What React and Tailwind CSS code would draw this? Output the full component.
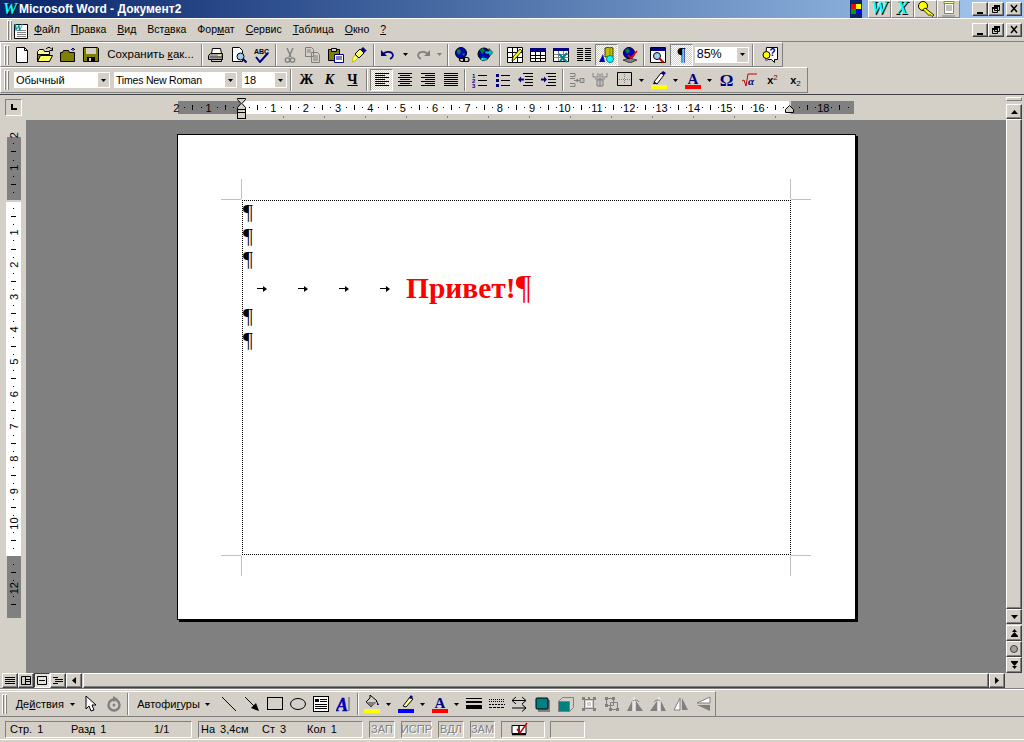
import React from "react";

const raised = "border border-t-white border-l-white border-b-[#404040] border-r-[#404040] shadow-[inset_-1px_-1px_0_#808080]";
const ui = { fontFamily: '"Liberation Sans", Arial, sans-serif' };
const serif = { fontFamily: '"Liberation Serif", serif' };

const S = ({ children, w = 16, h = 16, vb }) => (
  <svg width={w} height={h} viewBox={vb || `0 0 ${w} ${h}`} className="block shrink-0">{children}</svg>
);

const Lines = ({ rows }) => (
  <S>{rows.map(([x, w], i) => <rect key={i} x={x} y={1 + i * 2} width={w} height="1" fill="#000" />)}</S>
);

const Icons = {
  New: () => <S><path d="M2.5 .5h8l3 3v12h-11z" fill="#fff" stroke="#000" /><path d="M10.5 .5v3h3" fill="none" stroke="#000" /></S>,
  Open: () => <S><path d="M.5 4.5l2-2h4l1 2h5v3h-12z" fill="#ffff99" stroke="#000" /><path d="M.5 14.5v-7h12v7z" fill="#808000" stroke="#000" /><path d="M.5 14.5l3-6h12l-3 6z" fill="#ffff66" stroke="#000" /><path d="M9 2l2-1.5h2l2 2M15.5 .5v3h-3" fill="none" stroke="#000" /></S>,
  FolderUp: () => <S><path d="M.5 14.5v-9h2l1-2h5l1 2h5v9z" fill="#808000" stroke="#000" /><path d="M11 3l2-2 2 2M13 1v3" fill="none" stroke="#000080" /></S>,
  Save: () => <S><path d="M.5 .5h14l1 1v13h-15z" fill="#808000" stroke="#000" /><rect x="3" y="1" width="10" height="6" fill="#d4d0c8" /><rect x="4" y="10" width="8" height="5" fill="#000" /><rect x="6" y="11" width="2" height="3" fill="#d4d0c8" /></S>,
  Print: () => <S><path d="M4.5 1.5h8l1 5h-10z" fill="#fff" stroke="#000" /><path d="M.5 8.5l2-2h12v6h-14z" fill="#a0a0a0" stroke="#000" /><path d="M2 10h12" stroke="#404040" /><rect x="10" y="7.5" width="3" height="1.5" fill="#ffff00" /><path d="M3.5 12.5h10v2h-10z" fill="#d4d0c8" stroke="#000" /></S>,
  Preview: () => <S><path d="M1.5 .5h7l3 3v11h-10z" fill="#fff" stroke="#000" /><circle cx="9.5" cy="9.5" r="3.5" fill="#a6caf0" stroke="#000" /><path d="M12 12l3.5 3.5" stroke="#000080" strokeWidth="2" /></S>,
  Spell: () => <S><text x="0" y="6.5" fontSize="7" fontWeight="700" fill="#000" style={ui}>ABC</text><path d="M2 10l4 5 8-9" fill="none" stroke="#000080" strokeWidth="2" /></S>,
  Cut: () => <S><path d="M5 1l4 9M11 1l-4 9" stroke="#808080" strokeWidth="1.4" fill="none" /><circle cx="5.5" cy="13" r="2.2" fill="none" stroke="#808080" strokeWidth="1.3" /><circle cx="10.5" cy="13" r="2.2" fill="none" stroke="#808080" strokeWidth="1.3" /></S>,
  Copy: () => <S><path d="M.5 .5h6l2 2v7h-8zM6.5 5.5h6l2 2v8h-8z" fill="#d4d0c8" stroke="#808080" /><path d="M8 9h5M8 11h5M8 13h5M2 3h4M2 5h4" stroke="#808080" /></S>,
  Paste: () => <S><path d="M.5 2.5h11v11h-11z" fill="#808000" stroke="#000" /><path d="M3.5 1.5h5v3h-5z" fill="#d4d0c8" stroke="#000" /><path d="M6.5 7.5h9v8h-9z" fill="#fff" stroke="#000080" /><path d="M8 10h6M8 12h6" stroke="#000080" /></S>,
  Painter: () => <S><path d="M9 2l4 4-5 5-4-4z" fill="#ffff66" stroke="#000" /><path d="M12 .5l3 3-2 2-3-3z" fill="#000080" stroke="#000080" /><path d="M4 8l3 3-3 3-3 1 1-2-1-1z" fill="#ffff66" stroke="#c0c000" /></S>,
  Undo: () => <S><path d="M3 7c3-3 9-3 10 1 0 2-1 3-3 4" fill="none" stroke="#000080" strokeWidth="1.6" /><path d="M1 3v6h6z" fill="#000080" /></S>,
  Redo: () => <S><path d="M13 7c-3-3-9-3-10 1 0 2 1 3 3 4" fill="none" stroke="#808080" strokeWidth="1.6" /><path d="M15 3v6H9z" fill="#808080" /></S>,
  Web: () => <S><circle cx="7" cy="6" r="5.5" fill="#0000c0" stroke="#000" /><path d="M3 3l3-1 1 3-2 3-2-2zM8 7l3-1-1 3z" fill="#008040" /><rect x="5.5" y="10.5" width="5" height="4" rx="2" fill="none" stroke="#000" strokeWidth="1.2" /><rect x="9.5" y="10.5" width="5.5" height="4" rx="2" fill="none" stroke="#000" strokeWidth="1.2" /></S>,
  Globe: () => <S><circle cx="7" cy="7" r="6" fill="#0000c0" stroke="#000" /><path d="M3 3l3-2 2 3-3 3zM5 9l3 1-1 3z" fill="#008040" /><path d="M8 4h4V1.5l4 4-4 4V7H8z" fill="#00c0c0" stroke="#000" strokeWidth=".6" /><path d="M3 12l3-2v1h4v2H6v1z" fill="#00ffff" stroke="#000" strokeWidth=".5" /></S>,
  TableDraw: () => <S><path d="M.5 .5h15v15H.5z" fill="#fff" stroke="#000" /><path d="M.5 5.5h15M.5 10.5h15M5.5 .5v15M10.5 .5v15" stroke="#000" /><path d="M5 14l1-4 7-8 2 2-7 8z" fill="#ffff00" stroke="#000" strokeWidth=".8" /></S>,
  Table: () => <S><path d="M.5 1.5h15v13H.5z" fill="#fff" stroke="#000" /><rect x="0" y="1" width="16" height="4" fill="#000080" /><path d="M.5 8.5h15M.5 11.5h15M5.5 5v9M10.5 5v9" stroke="#000" /></S>,
  Excel: () => <S><path d="M.5 1.5h15v13H.5z" fill="#fff" stroke="#000" /><rect x="0" y="1" width="16" height="3" fill="#000080" /><path d="M.5 7.5h15M.5 10.5h15M5.5 4v10M10.5 4v10" stroke="#808080" /><path d="M6 7l8 8M14 6l-7 8" stroke="#008080" strokeWidth="2" /></S>,
  Columns: () => <S><path d="M1 1.5h14M1 3.5h14M1 5.5h14M1 7.5h14M1 9.5h14M1 11.5h14M1 13.5h14" stroke="#000" /><rect x="7" y="0" width="2" height="15" fill="#d4d0c8" /></S>,
  Drawing: () => <S><path d="M6 1l5-1 3 1v9H6z" fill="#c0c000" stroke="#000" strokeWidth=".7" /><path d="M11 0v9" stroke="#808000" /><path d="M0 15l4-8 2 8z" fill="#0000c0" /><circle cx="11" cy="12" r="3.5" fill="#00ffff" stroke="#008080" /></S>,
  DocMap: () => <S><path d="M1 13l7-2 7 2-7 3z" fill="#808080" stroke="#000" strokeWidth=".6" /><circle cx="7" cy="6" r="5.5" fill="#0000c0" stroke="#000" /><path d="M3 3l3-2 2 3-3 3z" fill="#008040" /><path d="M6 8l3 3 6-7" stroke="#ff0000" strokeWidth="1.6" fill="none" /></S>,
  ZoomDoc: () => <S><path d="M.5 .5h15v15H.5z" fill="#fff" stroke="#000" /><rect x="1" y="1" width="14" height="3" fill="#000080" /><circle cx="7" cy="9" r="3.5" fill="#a6caf0" stroke="#000" /><path d="M9.5 11.5l4 4" stroke="#c00000" strokeWidth="2" /></S>,
  Help: () => <S w={17}><path d="M4.5 .5h11v12h-3v3l-3-3h-6z" fill="#fff" stroke="#000" /><circle cx="4.5" cy="8" r="3.5" fill="#ffff00" stroke="#000" /><rect x="3" y="12" width="3" height="2" fill="#808080" /><text x="7.5" y="9" fontSize="10" fontWeight="700" fill="#000080" style={ui}>?</text></S>,
  AlignL: () => <Lines rows={[[1, 14], [1, 10], [1, 14], [1, 10], [1, 14], [1, 10], [1, 14]]} />,
  AlignC: () => <Lines rows={[[1, 14], [3, 10], [1, 14], [3, 10], [1, 14], [3, 10], [1, 14]]} />,
  AlignR: () => <Lines rows={[[1, 14], [5, 10], [1, 14], [5, 10], [1, 14], [5, 10], [1, 14]]} />,
  AlignJ: () => <Lines rows={[[1, 14], [1, 14], [1, 14], [1, 14], [1, 14], [1, 14], [1, 14]]} />,
  Numbered: () => <S><text x="0" y="6" fontSize="6" fontWeight="700" fill="#000080" style={ui}>1</text><text x="0" y="11" fontSize="6" fontWeight="700" fill="#000080" style={ui}>2</text><text x="0" y="16" fontSize="6" fontWeight="700" fill="#000080" style={ui}>3</text><path d="M6 3.5h9M6 8.5h9M6 13.5h9" stroke="#000" /></S>,
  Bullets: () => <S><path d="M1 2h3v3H1zM1 7h3v3H1zM1 12h3v3H1z" fill="#000080" /><path d="M6 3.5h9M6 8.5h9M6 13.5h9" stroke="#000" /></S>,
  Outdent: () => <S><path d="M5 1.5h10M7 4.5h8M7 7.5h8M7 10.5h8M5 13.5h10" stroke="#000" /><path d="M0 7.5l3-3v2h3v2H3v2z" fill="#000080" /></S>,
  Indent: () => <S><path d="M5 1.5h10M7 4.5h8M7 7.5h8M7 10.5h8M5 13.5h10" stroke="#000" /><path d="M6 7.5l-3-3v2H0v2h3v2z" fill="#000080" /></S>,
  MergeA: () => <S><path d="M1 1.5h5v3H1M1 11.5h5v3H1" fill="none" stroke="#808080" /><path d="M1 6.5h5M5 8.5h6" stroke="#808080" /><path d="M6 8.5l3-2v4z" fill="#808080" /><path d="M11 6.5h4v4h-4z" fill="#c0c0c0" stroke="#808080" /></S>,
  MergeB: () => <S><path d="M1 1v4h5V1M10 1v4h5V1M3 7h10" fill="none" stroke="#808080" /><path d="M8 2v13M5 8h6v6H5z" fill="#c0c0c0" stroke="#808080" /></S>,
  Border: () => <S><path d="M.5 .5h14v13H.5z" fill="none" stroke="#000" /><path d="M7.5 2v10M2 7.5h11" stroke="#808080" strokeDasharray="1 1" /></S>,
  Highlight: () => <S h={18} w={16}><path d="M3 11l7-9 3 2-7 9z" fill="#fff" stroke="#000" /><path d="M10 2l2-2 3 2-2 2z" fill="#000080" /><path d="M3 11l3 2-4 0z" fill="#000" /><rect x="0" y="14" width="16" height="4" fill="#ffff00" /></S>,
  FontColor: () => <S h={18} w={16}><text x="8" y="13" textAnchor="middle" fontSize="15" fontWeight="700" fill="#000080" style={serif}>A</text><rect x="0" y="14" width="16" height="4" fill="#ff0000" /></S>,
  Sqrt: () => <S w={17}><path d="M1 9l2-1 2 6 2-12h9" fill="none" stroke="#c00000" /><text x="7" y="13" fontSize="11" fontStyle="italic" fill="#000080" fontWeight="700" style={serif}>α</text></S>,
  Cursor: () => <S><path d="M3 0v13l3-3 2 5 3-1-2-5h4z" fill="#fff" stroke="#000" /></S>,
  Rotate: () => <S><circle cx="8" cy="9" r="5.5" fill="none" stroke="#808080" strokeWidth="2.4" /><circle cx="8" cy="9" r="1.5" fill="#808080" /><path d="M7 0l5 3-5 3z" fill="#808080" /></S>,
  Line: () => <S><path d="M1 1l14 14" stroke="#000" fill="none" /></S>,
  ArrowLine: () => <S><path d="M1 1l9 9" stroke="#000" /><path d="M15 15l-8-3 5-5z" fill="#000" /></S>,
  Rect: () => <S><rect x=".5" y="1.5" width="15" height="12" fill="none" stroke="#000" /></S>,
  Ellipse: () => <S><ellipse cx="8" cy="8" rx="7.5" ry="5.5" fill="none" stroke="#000" /></S>,
  TextBox: () => <S><rect x=".5" y=".5" width="15" height="15" fill="#fff" stroke="#000" /><path d="M2 3h4v3H2z" fill="#000" /><path d="M7 3.5h7M7 5.5h7M2 8.5h12M2 10.5h12M2 12.5h12" stroke="#000" /></S>,
  WordArt: () => <S><text x="0" y="15" fontSize="18" fontWeight="700" fontStyle="italic" fill="#0000c0" stroke="#000080" strokeWidth=".4" style={serif}>A</text><path d="M13 1v14" stroke="#808080" strokeWidth="1.5" /></S>,
  Fill: () => <S h={18} w={16}><path d="M6 0v3L2 7l5 5 6-6z" fill="#d4d0c8" stroke="#000" /><path d="M2 7h11l-6 5z" fill="#808080" /><path d="M13 6l2 4h-2z" fill="#000080" /><rect x="0" y="14" width="16" height="4" fill="#ffff00" /></S>,
  LineColor: () => <S h={18} w={16}><path d="M5 11l7-9 3 2-7 8z" fill="#ffff99" stroke="#000" /><path d="M11 3l2-3 2 2-2 2z" fill="#000080" /><rect x="0" y="14" width="16" height="4" fill="#0000ff" /></S>,
  Thick: () => <S><rect x="0" y="2" width="16" height="1" /><rect x="0" y="5" width="16" height="2" /><rect x="0" y="9" width="16" height="4" /></S>,
  Dash: () => <S><path d="M0 3.5h16M0 5.5h16" stroke="#000" strokeDasharray="1 1" /><path d="M0 8.5h16" stroke="#000" strokeDasharray="2 1" /><path d="M0 11.5h16" stroke="#000" strokeDasharray="3 1" /></S>,
  Arrows: () => <S><path d="M0 4.5h14M10 1l4 3.5-4 3.5M0 12h14M10 8.5l4 3.5-4 3.5M4 1L0 4.5l4 3.5" fill="none" stroke="#000" /></S>,
  Shadow: () => <S><rect x="3" y="4" width="12" height="12" fill="#808080" /><rect x="1" y="2" width="12" height="11" rx="1" fill="#008080" stroke="#000" /></S>,
  Cube: () => <S><path d="M.5 5.5l4-4h11v10l-4 4h-11z" fill="#d4d0c8" stroke="#808080" /><path d="M.5 5.5h11v10h-11z" fill="#008080" stroke="#808080" /></S>,
  Group: () => <S><path d="M3.5 3.5h9v9h-9z" fill="none" stroke="#808080" /><path d="M1 1h3v3H1zM7 1h2v2H7zM12 1h3v3h-3zM1 12h3v3H1zM12 12h3v3h-3z" fill="#808080" /><path d="M5.5 5.5h5v5h-5z" fill="none" stroke="#fff" /></S>,
  Ungroup: () => <S><path d="M2.5 2.5h7v7h-7zM6.5 6.5h7v7h-7z" fill="none" stroke="#808080" /><path d="M1 1h3v3H1zM8 1h3v3H8zM1 8h3v3H1zM12 12h3v3h-3zM5 12h3v3H5z" fill="#808080" /></S>,
  RotL: () => <S><path d="M0 15l5-10v10zM9 5l7 10H9z" fill="#808080" /><path d="M7 1v14" stroke="#fff" /><path d="M6 5a4 4 0 016 1" stroke="#808080" fill="none" /></S>,
  RotR: () => <S><path d="M16 15l-5-10v10zM7 5L0 15h7z" fill="#808080" /><path d="M9 1v14" stroke="#fff" /><path d="M10 5a4 4 0 00-6 1" stroke="#808080" fill="none" /></S>,
  FlipH: () => <S><path d="M7 2v12H1z" fill="#fff" stroke="#808080" /><path d="M9 2v12h6z" fill="#808080" /></S>,
  FlipV: () => <S><path d="M14 1v6H1z" fill="#fff" stroke="#808080" /><path d="M14 9v6L1 9z" fill="#808080" /></S>,
};

const Btn = ({ children, pressed, className = "w-[23px]" }) => (
  <div className={`${className} h-[22px] shrink-0 flex items-center justify-center ${pressed ? "border border-t-[#808080] border-l-[#808080] border-b-white border-r-white bg-[repeating-conic-gradient(#d4d0c8_0_25%,#ffffff_0_50%)] bg-size-[2px_2px]" : ""}`}>
    {children}
  </div>
);

const Tri = ({ fill = "#000" }) => (
  <svg width="5" height="3" viewBox="0 0 5 3" className="block shrink-0"><path d="M0 0h5L2.5 3z" fill={fill} /></svg>
);
const Arrow = ({ fill }) => (
  <div className="w-[11px] h-[22px] shrink-0 flex items-center justify-center"><Tri fill={fill} /></div>
);

const Sep = ({ className = "w-[5px]" }) => (
  <div className={`${className} h-[22px] shrink-0 flex justify-center`}>
    <div className="w-[2px] h-full border-l border-l-[#808080] border-r border-r-white" />
  </div>
);

const Grip = () => (
  <div className="w-[5px] h-[20px] shrink-0 flex gap-px ml-[2px]">
    <div className="w-[2px] h-full border-l border-t border-white bg-[#808080]" />
    <div className="w-[2px] h-full border-l border-t border-white bg-[#808080]" />
  </div>
);

const Combo = ({ text, className, textClass = "text-[11px]" }) => (
  <div className={`${className} h-[16px] shrink-0 bg-white flex items-center justify-between text-black pl-[2px]`}>
    <span className={`leading-none ${textClass}`}>{text}</span>
    <div className="w-[11px] h-[14px] mr-px bg-[#d4d0c8] flex items-center justify-center"><Tri /></div>
  </div>
);

const WinBtn = ({ children }) => (
  <div className={`w-[16px] h-[14px] bg-[#d4d0c8] ${raised} flex items-center justify-center`}>
    <svg width="10" height="10" viewBox="0 0 10 10">{children}</svg>
  </div>
);

const WinBtns = () => (
  <div className="flex">
    <WinBtn><rect x="2" y="8" width="6" height="2" fill="#000" /></WinBtn>
    <WinBtn><path d="M3.5 1.5h5v5h-5zM1.5 3.5h5v5h-5z" fill="#d4d0c8" stroke="#000" /><path d="M3 1h6v2H3zM1 3h6v2H1z" fill="#000" /></WinBtn>
    <div className="w-[2px]" />
    <WinBtn><path d="M2 1l6 7M8 1L2 8" stroke="#000" strokeWidth="1.5" /></WinBtn>
  </div>
);

const TrayBtn = ({ children }) => (
  <div className="w-[23px] h-[18px] bg-[#d4d0c8] border border-t-white border-l-white border-b-[#808080] border-r-[#808080] flex items-center justify-center">
    {children}
  </div>
);

const WLogo = ({ letter = "W", size = 16, w = 17 }) => (
  <svg width={w} height="16" viewBox={`0 0 ${w} 16`} className="block overflow-visible">
    <text x={w / 2 + 0.5} y="14" textAnchor="middle" fontSize={size} fontWeight="700" fontStyle="italic" fill="#000" style={serif}>{letter}</text>
    <text x={w / 2 - 0.5} y="13" textAnchor="middle" fontSize={size} fontWeight="700" fontStyle="italic" fill="#00ffff" style={serif}>{letter}</text>
  </svg>
);

const Toolbar = ({ children, className }) => (
  <div className={`${className} h-full flex items-center border-t border-t-white border-l border-l-white border-b border-b-[#808080] border-r border-r-[#808080]`}>{children}</div>
);

function HRuler() {
  const items = [];
  for (let k = -8; k <= 75; k++) {
    const x = 241 + (32.35 * k) / 4;
    if (k === 0 || k === 68 || x > 852) continue;
    if (k % 4 === 0) {
      items.push(<text key={k} x={x} y="112" textAnchor="middle" fontSize="11" fill="#000" style={ui}>{Math.abs(k / 4)}</text>);
    } else if (k % 2 === 0) {
      items.push(<rect key={k} x={Math.round(x)} y="105" width="1" height="5" fill="#000" />);
    } else {
      items.push(<rect key={k} x={Math.round(x)} y="107" width="1" height="1" fill="#000" />);
    }
  }
  const stops = [];
  for (let i = 1; i <= 13; i++) stops.push(<rect key={i} x={242 + 41 * i} y="116" width="1" height="2" fill="#808080" />);
  return (
    <svg width="980" height="25" viewBox="26 95 980 25" className="block">
      <rect x="178" y="101" width="64" height="13" fill="#808080" />
      <rect x="242" y="101" width="547" height="13" fill="#fff" />
      <rect x="791" y="101" width="63" height="13" fill="#808080" />
      {items}
      {stops}
      <path d="M237.5 98.5h8v1l-3.5 4 3.5 4v2h-8v-2l3.5-4-3.5-4z" fill="#d4d0c8" stroke="#000" />
      <rect x="237.5" y="112.5" width="8" height="6" fill="#d4d0c8" stroke="#000" />
      <path d="M237.5 109.5h8v3h-8z" fill="#d4d0c8" stroke="#000" />
      <path d="M785.5 112.5v-3l4-4 4 4v3z" fill="#d4d0c8" stroke="#000" />
    </svg>
  );
}

function VRuler() {
  const items = [];
  for (let k = -8; k <= 50; k++) {
    const y = 200 + (32.35 * k) / 4;
    if (k === 0 || k === 44 || y > 616) continue;
    if (k % 4 === 0) {
      items.push(<text key={k} x="0" y="0" textAnchor="middle" fontSize="11" fill="#000" style={ui} transform={`translate(18 ${y}) rotate(-90)`}>{Math.abs(k / 4)}</text>);
    } else if (k % 2 === 0) {
      items.push(<rect key={k} x="11" y={Math.round(y)} width="5" height="1" fill="#000" />);
    } else {
      items.push(<rect key={k} x="13" y={Math.round(y)} width="1" height="1" fill="#000" />);
    }
  }
  return (
    <svg width="26" height="553" viewBox="0 120 26 553" className="block shrink-0">
      <rect x="7" y="137" width="14" height="63" fill="#808080" />
      <rect x="6" y="202" width="15" height="354" fill="#fff" />
      <rect x="7" y="556" width="14" height="62" fill="#808080" />
      {items}
    </svg>
  );
}

const ScrollBtn = ({ children, className = "h-[15px]" }) => (
  <div className={`w-[16px] ${className} shrink-0 bg-[#d4d0c8] ${raised} flex items-center justify-center`}>{children}</div>
);

const Pil = ({ className = "h-[24px] leading-[24px]" }) => (
  <div className={`${className} text-[22px] text-black`} style={serif}>¶</div>
);

const Tab = () => (
  <svg width="10" height="6" viewBox="0 0 10 6" className="block shrink-0 mt-[2px]">
    <path d="M0 2.5h7" stroke="#000" /><path d="M6 0l4 3-4 3z" fill="#000" />
  </svg>
);

const StatusCell = ({ children, className }) => (
  <div className={`${className} h-[17px] border border-t-[#808080] border-l-[#808080] border-b-white border-r-white flex items-center`}>{children}</div>
);

const Off = ({ children, className }) => (
  <StatusCell className={`${className} justify-center text-[#808080] [text-shadow:1px_1px_0_#ffffff]`}>{children}</StatusCell>
);

const I = Icons;

const Crop = ({ className }) => <div className={`absolute bg-[#c0c0c0] ${className}`} />;

export default function App() {
  return (
    <div className="w-[1024px] h-[742px] bg-[#d4d0c8] overflow-hidden flex flex-col select-none" style={ui}>
      {/* Title bar */}
      <div className="h-[18px] shrink-0 flex items-center bg-gradient-to-r from-[#0a246a] to-[#a6caf0]">
        <div className="ml-[2px] w-[17px]"><WLogo /></div>
        <span className="text-white font-bold text-[12px] leading-none">Microsoft Word - Документ2</span>
        <div className="ml-auto flex items-center h-full">
          <div className="w-[12px] h-[18px] bg-[#0a246a] flex items-center justify-center mr-[6px]">
            <svg width="10" height="10" viewBox="0 0 10 10"><rect width="5" height="5" fill="#ff0000" /><rect x="5" width="5" height="5" fill="#ffff00" /><rect y="5" width="5" height="5" fill="#00a000" /><rect x="5" y="5" width="5" height="5" fill="#0000ff" /></svg>
          </div>
          <TrayBtn><WLogo size={19} w={19} /></TrayBtn>
          <TrayBtn><WLogo letter="X" size={19} w={19} /></TrayBtn>
          <TrayBtn>
            <svg width="18" height="16" viewBox="0 0 18 16"><circle cx="6" cy="5" r="4.5" fill="#ffff00" stroke="#000" /><path d="M8 7l9 7-2 1.500-2-2-1 1-6-6z" fill="#ffff00" stroke="#000" strokeWidth=".8" /></svg>
          </TrayBtn>
          <TrayBtn>
            <svg width="14" height="16" viewBox="0 0 14 16"><path d="M2.5 .5h9v12h-9z" fill="#fff" stroke="#808080" /><path d="M2 .5h10v2H2z" fill="#ffff99" stroke="#808080" /><path d="M4 5h6M4 7h6M4 9h6" stroke="#808080" /><path d="M0 15h13" stroke="#808080" /></svg>
          </TrayBtn>
          <div className="w-[12px]" />
          <WinBtns />
          <div className="w-[2px]" />
        </div>
      </div>
      <div className="h-px bg-white shrink-0" />

      {/* Menu bar */}
      <div className="h-[23px] shrink-0 flex items-center border-b border-b-[#808080] pl-[5px]">
        <Grip />
        <svg width="17" height="17" viewBox="0 0 17 17" className="block shrink-0">
          <path d="M2.5 2.5h13v14h-13z" fill="#fff" stroke="#000" />
          <path d="M5 8.5h9M5 10.5h9M5 12.5h9M5 14.5h9" stroke="#808080" />
          <text x="1" y="9" fontSize="11" fontWeight="700" fontStyle="italic" fill="#008080" style={serif}>W</text>
        </svg>
        <nav className="flex text-[10.5px] text-black ml-[5px] gap-[11px]">
          <span><u>Ф</u>айл</span>
          <span><u>П</u>равка</span>
          <span><u>В</u>ид</span>
          <span>Вст<u>а</u>вка</span>
          <span>Фор<u>м</u>ат</span>
          <span><u>С</u>ервис</span>
          <span><u>Т</u>аблица</span>
          <span><u>О</u>кно</span>
          <span><u>?</u></span>
        </nav>
        <div className="ml-auto mr-[2px]"><WinBtns /></div>
      </div>

      {/* Toolbar 1 */}
      <div className="h-[25px] shrink-0">
        <Toolbar className="w-[783px] pl-[1px]">
          <Grip />
          <div className="w-[2px]" />
          <Btn><I.New /></Btn><Btn><I.Open /></Btn><Btn><I.FolderUp /></Btn><Btn><I.Save /></Btn>
          <Btn className="w-[96px] text-[11.5px] text-black"><span>Сохранить <u>к</u>ак...</span></Btn>
          <Sep className="w-[6px]" />
          <Btn><I.Print /></Btn><Btn><I.Preview /></Btn><Btn><I.Spell /></Btn>
          <Sep />
          <Btn><I.Cut /></Btn><Btn><I.Copy /></Btn><Btn><I.Paste /></Btn><Btn><I.Painter /></Btn>
          <Sep className="w-[6px]" />
          <Btn><I.Undo /></Btn><Arrow /><div className="w-px" /><Btn><I.Redo /></Btn><Arrow fill="#808080" />
          <Sep />
          <Btn><I.Web /></Btn><Btn><I.Globe /></Btn>
          <Sep className="w-[7px]" />
          <Btn><I.TableDraw /></Btn><Btn><I.Table /></Btn><Btn><I.Excel /></Btn><Btn><I.Columns /></Btn>
          <Btn pressed><I.Drawing /></Btn><Btn><I.DocMap /></Btn>
          <Sep />
          <Btn><I.ZoomDoc /></Btn>
          <div className="w-px" />
          <Btn pressed><span className="text-[18px] leading-none text-black" style={serif}>¶</span></Btn>
          <div className="w-[2px]" />
          <Combo text="85%" className="w-[54px]" textClass="text-[12.5px]" />
          <Sep className="w-[8px]" />
          <div className="w-[3px]" />
          <Btn><I.Help /></Btn>
        </Toolbar>
      </div>

      {/* Toolbar 2 */}
      <div className="h-[26px] shrink-0">
        <Toolbar className="w-[808px] pl-[1px]">
          <Grip />
          <div className="w-[5px]" />
          <Combo text="Обычный" className="w-[96px]" />
          <div className="w-[4px]" />
          <Combo text="Times New Roman" className="w-[123px]" textClass="text-[10.5px] tracking-[-0.2px]" />
          <div className="w-[5px]" />
          <Combo text="18" className="w-[45px]" />
          <Sep className="w-[8px]" />
          <Btn><span className="font-bold text-[14px] text-black leading-none" style={serif}>Ж</span></Btn>
          <Btn><span className="font-bold italic text-[14px] text-black leading-none" style={serif}>К</span></Btn>
          <Btn><span className="font-bold underline text-[14px] text-black leading-none" style={serif}>Ч</span></Btn>
          <Sep className="w-[6px]" />
          <Btn pressed><I.AlignL /></Btn><Btn><I.AlignC /></Btn><Btn><I.AlignR /></Btn><Btn><I.AlignJ /></Btn>
          <Sep className="w-[6px]" />
          <Btn><I.Numbered /></Btn><Btn><I.Bullets /></Btn><Btn><I.Outdent /></Btn><Btn><I.Indent /></Btn>
          <Sep />
          <Btn><I.MergeA /></Btn><Btn><I.MergeB /></Btn>
          <div className="w-[2px]" />
          <Btn><I.Border /></Btn><Arrow />
          <Btn><I.Highlight /></Btn><Arrow />
          <Btn><I.FontColor /></Btn><Arrow />
          <Btn><span className="font-bold text-[17px] leading-none text-[#000080]" style={serif}>Ω</span></Btn>
          <Btn><I.Sqrt /></Btn>
          <Btn><span className="font-bold text-[11px] text-black leading-none">x<sup className="text-[8px] font-normal text-[#800000]">2</sup></span></Btn>
          <Btn><span className="font-bold text-[11px] text-black leading-none">x<sub className="text-[8px] font-normal text-[#000080]">2</sub></span></Btn>
        </Toolbar>
      </div>
      <div className="h-px shrink-0" />

      {/* Document area */}
      <div className="h-[579px] shrink-0 flex border-t border-t-[#404040]">
        <div className="w-[1006px] flex flex-col shrink-0">
          <div className="h-[25px] flex shrink-0">
            <div className="w-[26px] shrink-0 pl-[5px] pt-[4px]">
              <div className="w-[17px] h-[17px] border border-t-[#808080] border-l-[#808080] border-b-white border-r-white flex items-center justify-center">
                <svg width="9" height="9" viewBox="0 0 9 9"><path d="M2 1v6h6V5H4V1z" fill="#000" /></svg>
              </div>
            </div>
            <HRuler />
          </div>
          <div className="flex flex-1 min-h-0">
            <VRuler />
            <div className="flex-1 bg-[#808080] pl-[151px] pt-[14px]">
              {/* Page */}
              <div className="relative w-[679px] h-[486px] bg-white border border-black shadow-[2px_2px_0_#000]">
                <div className="ml-[64px] mt-[65px] w-[549px] h-[355px] border border-dotted border-black">
                  <Pil className="h-[24px] leading-[22px]" /><Pil className="h-[24px] leading-[22px]" /><Pil className="h-[23px] leading-[20px]" />
                  <div className="h-[32px] flex items-center pl-[14px]" style={serif}>
                    <Tab /><div className="w-[31px]" /><Tab /><div className="w-[31px]" /><Tab /><div className="w-[31px]" /><Tab />
                    <div className="w-[16px]" />
                    <span className="mb-[3px] leading-none text-[#ff0000]">
                      <span className="text-[29.5px] font-bold">Привет!</span>
                      <span className="text-[34px]">¶</span>
                    </span>
                  </div>
                  <Pil /><Pil />
                </div>
                <Crop className="left-[43px] top-[64px] w-[20px] h-px" />
                <Crop className="left-[63px] top-[44px] w-px h-[20px]" />
                <Crop className="left-[613px] top-[64px] w-[20px] h-px" />
                <Crop className="left-[612px] top-[44px] w-px h-[20px]" />
                <Crop className="left-[43px] top-[420px] w-[20px] h-px" />
                <Crop className="left-[63px] top-[421px] w-px h-[20px]" />
                <Crop className="left-[613px] top-[420px] w-[20px] h-px" />
                <Crop className="left-[612px] top-[421px] w-px h-[20px]" />
              </div>
            </div>
          </div>
        </div>
        {/* Vertical scrollbar */}
        <div className="w-[16px] flex flex-col pt-[2px] shrink-0">
          <div className="h-[4px] w-[16px] shrink-0 border border-t-white border-l-white border-b-[#808080] border-r-[#808080]" />
          <div className="h-[3px] shrink-0" />
          <ScrollBtn><svg width="7" height="4" viewBox="0 0 7 4"><path d="M3.5 0L7 4H0z" /></svg></ScrollBtn>
          <div className={`flex-1 w-[16px] bg-[#d4d0c8] ${raised}`} />
          <ScrollBtn><svg width="7" height="4" viewBox="0 0 7 4"><path d="M0 0h7L3.5 4z" /></svg></ScrollBtn>
          <div className="h-px shrink-0" />
          <ScrollBtn className="h-[16px]"><svg width="7" height="8" viewBox="0 0 7 8"><path d="M3.5 0L6 3H1zM3.5 3L7 7H0zM0 7h7v1H0z" /></svg></ScrollBtn>
          <ScrollBtn className="h-[16px]"><svg width="8" height="8" viewBox="0 0 8 8"><circle cx="4" cy="4" r="3.5" fill="#a0a0a0" stroke="#404040" /></svg></ScrollBtn>
          <ScrollBtn className="h-[16px]"><svg width="7" height="8" viewBox="0 0 7 8"><path d="M0 0h7v1H0zM0 1h7L3.5 5zM1 5h5L3.5 8z" /></svg></ScrollBtn>
        </div>
      </div>

      {/* Horizontal scrollbar */}
      <div className="h-[15px] shrink-0 flex pl-[2px]">
        <ScrollBtn><svg width="10" height="9" viewBox="0 0 10 9"><path d="M0 1.5h10M0 3.5h10M0 5.5h10M0 7.5h10" stroke="#000" /></svg></ScrollBtn>
        <ScrollBtn><svg width="10" height="9" viewBox="0 0 10 9"><path d="M.5 .5h9v8h-9zM4.5 .5v8M5 3.5h4M5 5.5h4" fill="none" stroke="#000" /></svg></ScrollBtn>
        <div className="w-[16px] h-[15px] shrink-0 border border-t-[#404040] border-l-[#404040] border-b-white border-r-white flex items-center justify-center bg-[#e6e3dc]">
          <svg width="10" height="9" viewBox="0 0 10 9"><path d="M.5 .5h9v8h-9zM2 4.5h6" fill="none" stroke="#000" /></svg>
        </div>
        <ScrollBtn><svg width="10" height="9" viewBox="0 0 10 9"><path d="M0 1.5h5M2 3.5h8M2 5.5h8M0 7.5h5" stroke="#000" /></svg></ScrollBtn>
        <ScrollBtn><svg width="4" height="7" viewBox="0 0 4 7"><path d="M4 0v7L0 3.5z" /></svg></ScrollBtn>
        <div className={`w-[906px] h-[15px] bg-[#d4d0c8] ml-px ${raised}`} />
        <ScrollBtn><svg width="4" height="7" viewBox="0 0 4 7"><path d="M0 0v7l4-3.5z" /></svg></ScrollBtn>
      </div>

      {/* spacer under the scrollbar */}
      <div className="h-[3px] shrink-0 border-t border-t-[#808080]">
        <div className="h-px bg-white" />
      </div>

      {/* Drawing toolbar */}
      <div className="h-[26px] shrink-0 border-b border-b-[#808080]">
        <Toolbar className="w-[716px] border-l-0 border-b-0">
          <Grip />
          <div className="w-[2px]" />
          <Btn className="w-[71px] text-[11px] text-black pl-[2px]">
            <span>Де<u>й</u>ствия</span>
            <span className="ml-[6px]"><Tri /></span>
          </Btn>
          <Btn><I.Cursor /></Btn><Btn className="w-[22px]"><I.Rotate /></Btn>
          <div className="w-[3px]" />
          <Sep className="w-[2px]" />
          <div className="w-[3px]" />
          <Btn className="w-[85px] text-[11px] text-black pr-[2px]">
            <span>Автофи<u>г</u>уры</span>
            <span className="ml-[5px]"><Tri /></span>
          </Btn>
          <Btn><I.Line /></Btn><Btn><I.ArrowLine /></Btn><Btn><I.Rect /></Btn><Btn><I.Ellipse /></Btn><Btn><I.TextBox /></Btn><Btn><I.WordArt /></Btn>
          <Sep />
          <Btn><I.Fill /></Btn><Arrow />
          <Btn><I.LineColor /></Btn><Arrow />
          <Btn><I.FontColor /></Btn><Arrow />
          <Btn><I.Thick /></Btn><Btn><I.Dash /></Btn><Btn><I.Arrows /></Btn><Btn><I.Shadow /></Btn><Btn><I.Cube /></Btn>
          <Btn><I.Group /></Btn><Btn><I.Ungroup /></Btn><Btn><I.RotL /></Btn><Btn><I.RotR /></Btn><Btn><I.FlipH /></Btn><Btn><I.FlipV /></Btn>
        </Toolbar>
      </div>

      {/* Status bar */}
      <div className="flex-1 flex flex-col pt-[4px] text-[11px] text-black">
        <div className="flex items-start pl-[5px] [word-spacing:2px]">
          <StatusCell className="w-[187px] pl-[4px]">
            <span className="w-[61px]">Стр. 1</span><span className="w-[83px]">Разд 1</span><span>1/1</span>
          </StatusCell>
          <div className="w-[6px]" />
          <StatusCell className="w-[165px] pl-[2px]">
            <span className="w-[61px]">На 3,4см</span><span className="w-[45px]">Ст 3</span><span>Кол 1</span>
          </StatusCell>
          <div className="w-[6px]" />
          <Off className="w-[26px]">ЗАП</Off>
          <div className="w-[6px]" />
          <Off className="w-[31px]">ИСПР</Off>
          <div className="w-[6px]" />
          <Off className="w-[26px]">ВДЛ</Off>
          <div className="w-[6px]" />
          <Off className="w-[25px]">ЗАМ</Off>
          <div className="w-[6px]" />
          <StatusCell className="w-[44px] justify-start">
            <svg width="18" height="15" viewBox="0 0 18 15" className="ml-[9px]"><path d="M1 3.5h7v8H1zM8 3.5h7v8H8z" fill="#fff" stroke="#000" /><path d="M1 12.5h14" stroke="#000" strokeWidth="1.5" /><path d="M6 7l3 4 7-10" stroke="#c00000" strokeWidth="1.5" fill="none" /></svg>
          </StatusCell>
          <div className="w-[5px]" />
          <StatusCell className="w-[35px]" />
        </div>
        <div className="h-px bg-white mt-px" />
      </div>
    </div>
  );
}
